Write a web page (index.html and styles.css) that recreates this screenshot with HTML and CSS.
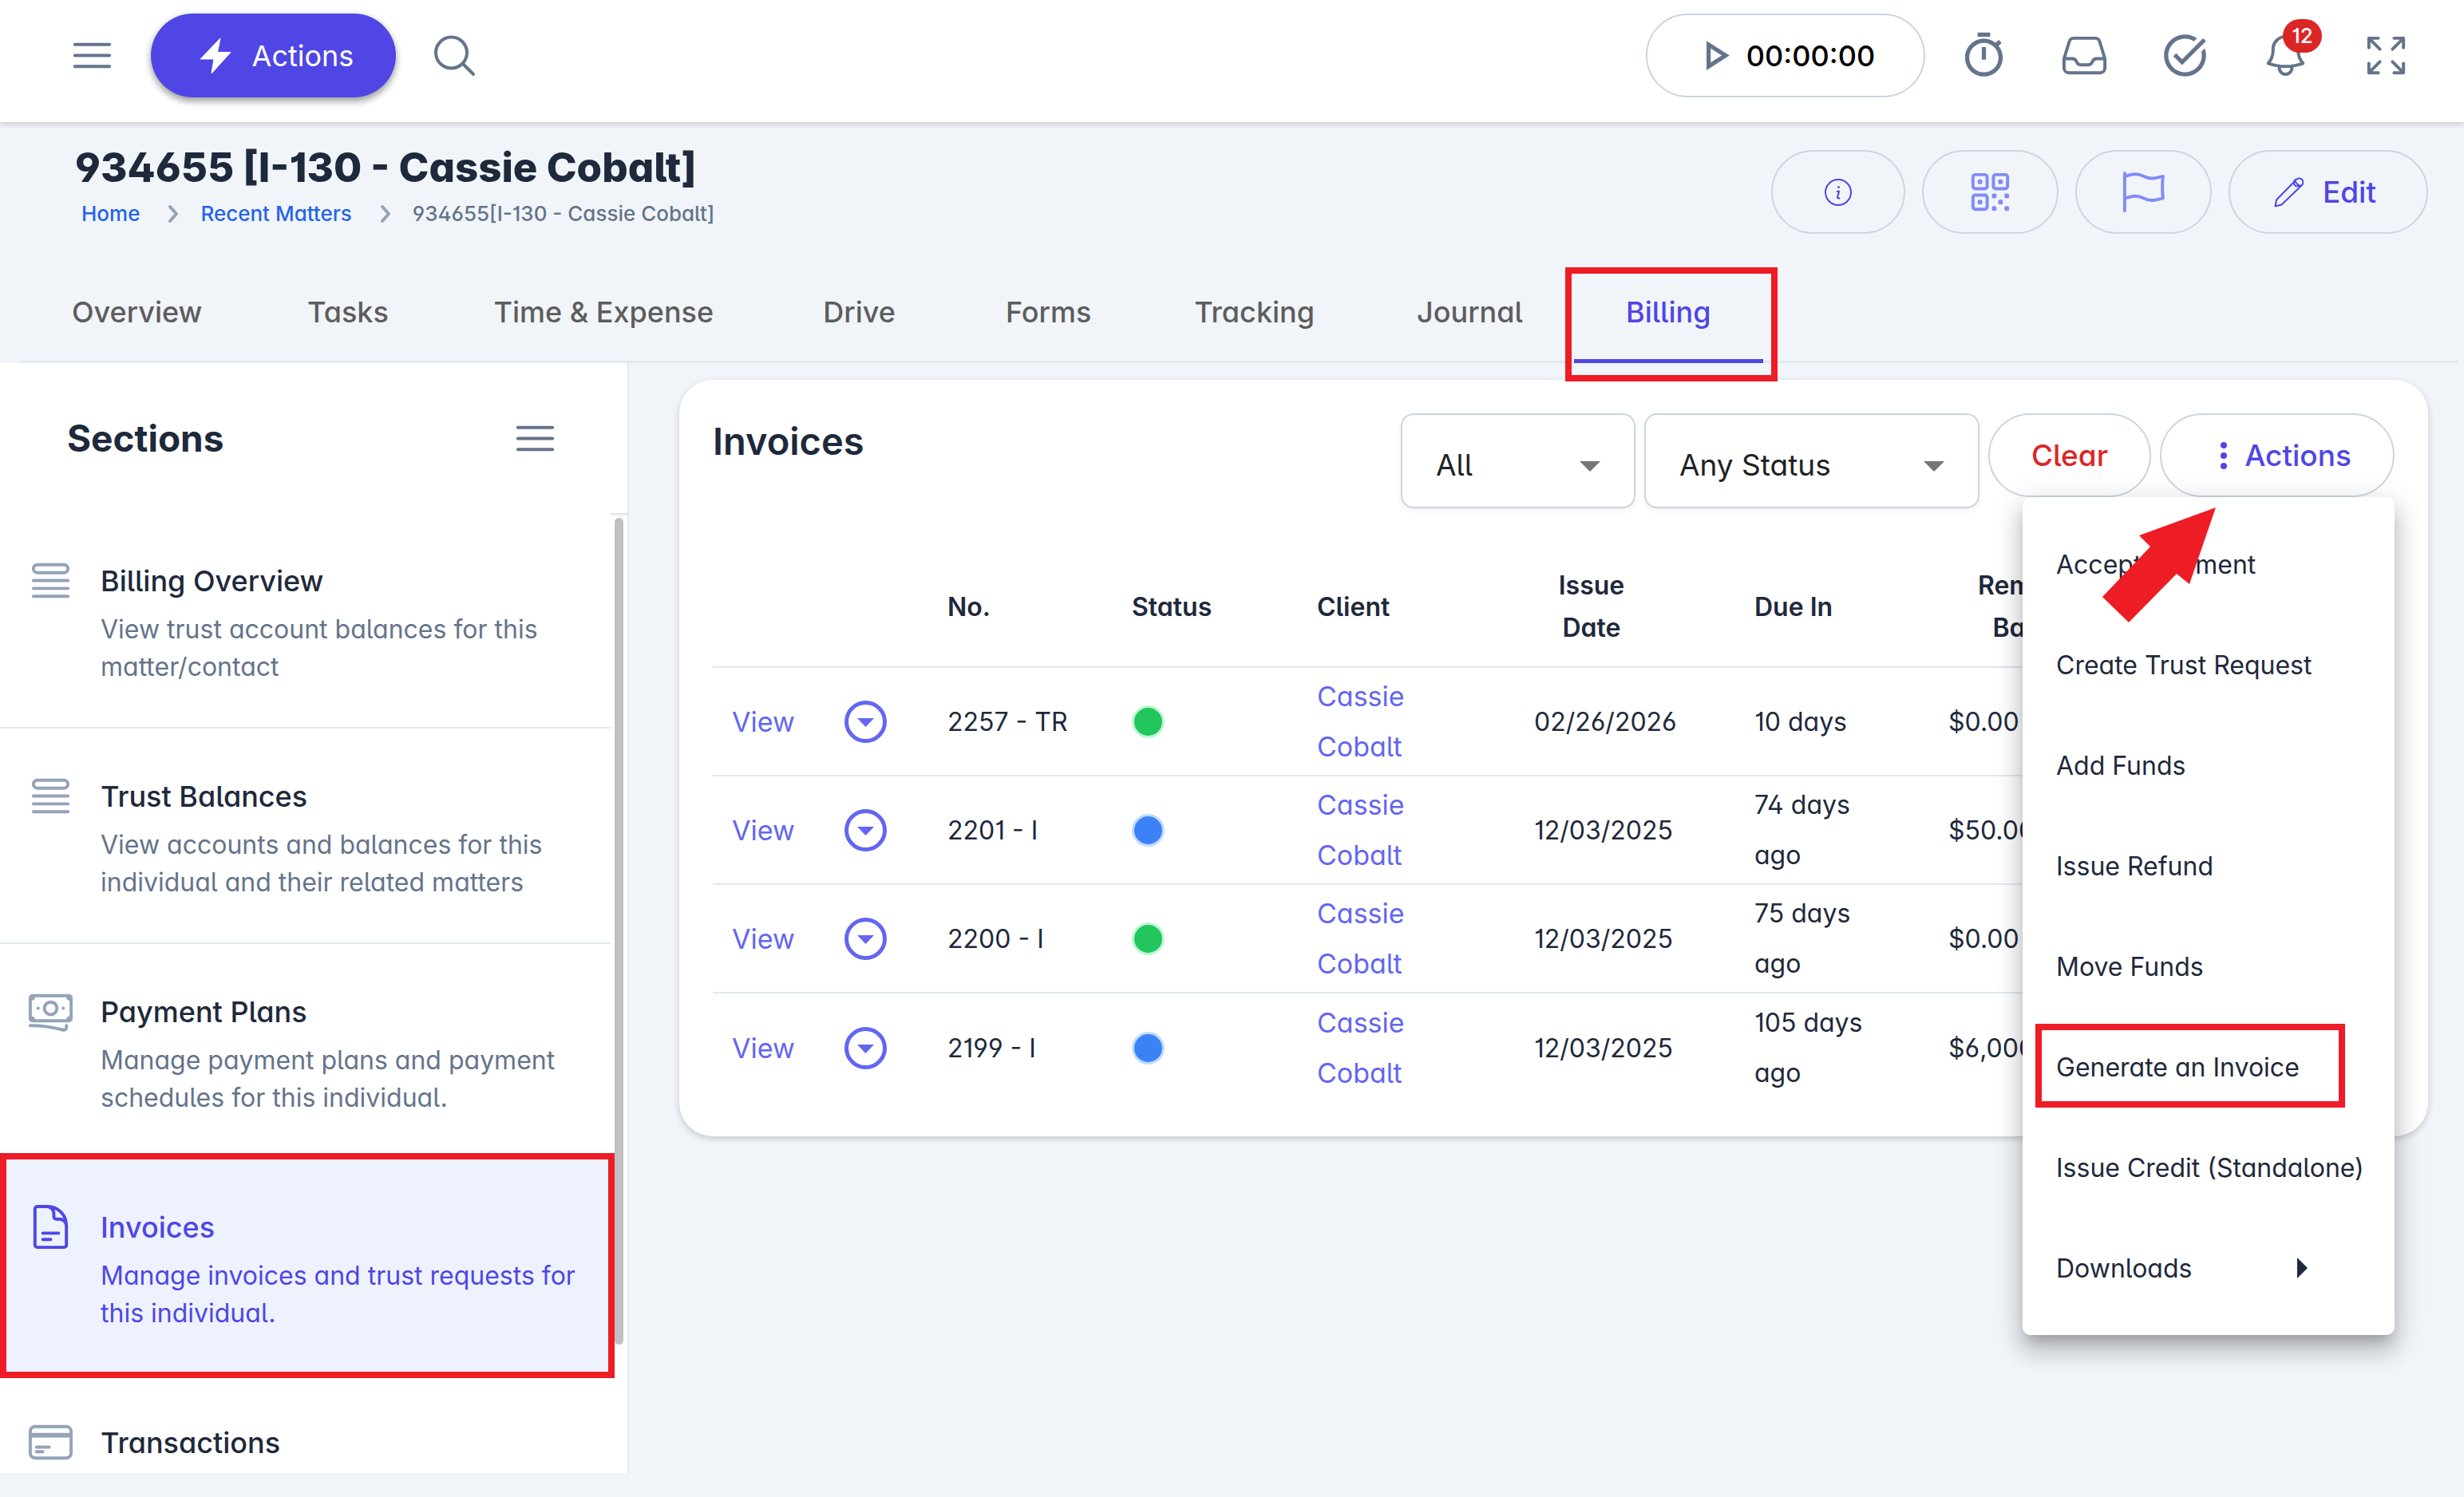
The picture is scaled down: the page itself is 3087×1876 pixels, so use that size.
FILE: index.html
```html
<!DOCTYPE html>
<html lang="en">
<head>
<meta charset="utf-8">
<title>934655 [I-130 - Cassie Cobalt]</title>
<link rel="stylesheet" href="styles.css">
</head>
<body>
<header class="topbar">
  <div class="topbar-group">
    <button class="icon-btn" type="button" aria-label="Menu">
      <svg class="icon line" viewBox="0 0 24 24"><path d="M3.75 6.75h16.5M3.75 12h16.5M3.75 17.25h16.5"/></svg>
    </button>
    <button class="btn primary" type="button">
      <svg class="bolt" viewBox="0 0 40 46"><path d="M26 1 22.5 18.500H39L15 45l3-18H1z"/></svg>
      Actions
    </button>
    <button class="icon-btn" type="button" aria-label="Search">
      <svg class="icon line search" viewBox="0 0 63 63"><circle cx="27.500" cy="28" r="19.500"/><path d="m42 42 13 13"/></svg>
    </button>
  </div>
  <div class="topbar-group">
    <button class="btn timer" type="button">
      <svg class="icon solid" viewBox="0 0 24 24"><path d="M10 8.640 15.270 12 10 15.360V8.640M8 5v14l11-7L8 5z"/></svg>
      00:00:00
    </button>
    <button class="icon-btn" type="button" aria-label="Timers">
      <svg class="icon solid" viewBox="0 0 24 24"><path d="M15 1H9v2h6V1zm-4 13h2V8h-2v6zm8.030-6.610l1.420-1.420c-.43-.51-.9-.99-1.410-1.410l-1.420 1.420A8.962 8.962 0 0 0 12 4c-4.970 0-9 4.030-9 9s4.020 9 9 9a8.994 8.994 0 0 0 7.030-14.610zM12 20c-3.870 0-7-3.130-7-7s3.130-7 7-7 7 3.130 7 7-3.130 7-7 7z"/></svg>
    </button>
    <button class="icon-btn" type="button" aria-label="Inbox">
      <svg class="icon line" viewBox="0 0 24 24"><path d="M2.25 13.5h3.86a2.25 2.25 0 012.012 1.244l.256.512a2.25 2.25 0 002.013 1.244h3.218a2.25 2.25 0 002.013-1.244l.256-.512a2.25 2.25 0 012.013-1.244h3.859m-19.5.338V18a2.25 2.25 0 002.25 2.25h15A2.25 2.25 0 0021.75 18v-4.162c0-.224-.034-.447-.1-.661L19.24 5.338a2.25 2.25 0 00-2.15-1.588H6.911a2.25 2.25 0 00-2.15 1.588L2.35 13.177a2.25 2.25 0 00-.1.661z"/></svg>
    </button>
    <button class="icon-btn" type="button" aria-label="Tasks">
      <svg class="icon solid" viewBox="0 0 24 24"><path d="M22 5.18L10.59 16.6l-4.24-4.24 1.41-1.41 2.83 2.83 10-10L22 5.18zm-2.21 5.04c.13.57.21 1.17.21 1.78 0 4.42-3.58 8-8 8s-8-3.58-8-8 3.58-8 8-8c1.58 0 3.04.46 4.28 1.25l1.44-1.44A9.9 9.9 0 0 0 12 2C6.48 2 2 6.48 2 12s4.48 10 10 10 10-4.48 10-10c0-1.19-.22-2.33-.6-3.39l-1.61 1.61z"/></svg>
    </button>
    <button class="icon-btn" type="button" aria-label="Notifications">
      <svg class="icon line" viewBox="0 0 24 24"><path d="M14.857 17.082a23.848 23.848 0 005.454-1.31A8.967 8.967 0 0118 9.75v-.7V9A6 6 0 006 9v.75a8.967 8.967 0 01-2.312 6.022c1.733.64 3.56 1.085 5.455 1.31m5.714 0a24.255 24.255 0 01-5.714 0m5.714 0a3 3 0 11-5.714 0"/></svg>
      <span class="badge">12</span>
    </button>
    <button class="icon-btn" type="button" aria-label="Full screen">
      <svg class="icon line" viewBox="0 0 24 24"><path d="M3.75 3.75v4.5m0-4.5h4.5m-4.5 0L9 9M3.75 20.25v-4.5m0 4.5h4.5m-4.5 0L9 15M20.25 3.75h-4.5m4.5 0v4.5m0-4.5L15 9m5.25 11.25h-4.5m4.5 0v-4.5m0 4.5L15 15"/></svg>
    </button>
  </div>
</header>

<div class="page-head">
  <div class="heading">
    <h1 class="title">934655 [I-130 - Cassie Cobalt]</h1>
    <nav class="crumbs" aria-label="Breadcrumb">
      <a href="#">Home</a>
      <svg class="chevron" viewBox="0 0 16 24"><path d="m4 3 8 9-8 9"/></svg>
      <a href="#">Recent Matters</a>
      <svg class="chevron" viewBox="0 0 16 24"><path d="m4 3 8 9-8 9"/></svg>
      <span>934655[I-130 - Cassie Cobalt]</span>
    </nav>
  </div>
  <div class="head-actions">
    <button class="btn outline" type="button" aria-label="Info">
      <svg class="info" viewBox="0 0 34 34"><circle cx="17" cy="17" r="16"/><path d="M15 16.500q3-2 3 0l-2 6.500q0 2.500 3 1"/><circle class="dot" cx="17.500" cy="10.500" r="1.500"/></svg>
    </button>
    <button class="btn outline soft" type="button" aria-label="QR code">
      <svg class="icon line" viewBox="0 0 24 24"><path d="M3.75 4.875c0-.621.504-1.125 1.125-1.125h4.5c.621 0 1.125.504 1.125 1.125v4.5c0 .621-.504 1.125-1.125 1.125h-4.5A1.125 1.125 0 013.75 9.375v-4.5zM3.75 14.625c0-.621.504-1.125 1.125-1.125h4.5c.621 0 1.125.504 1.125 1.125v4.5c0 .621-.504 1.125-1.125 1.125h-4.5a1.125 1.125 0 01-1.125-1.125v-4.5zM13.5 4.875c0-.621.504-1.125 1.125-1.125h4.5c.621 0 1.125.504 1.125 1.125v4.5c0 .621-.504 1.125-1.125 1.125h-4.5A1.125 1.125 0 0113.5 9.375v-4.5z"/><path d="M6.75 6.75h.75v.75h-.75v-.75zM6.75 16.5h.75v.75h-.75v-.75zM16.5 6.75h.75v.75h-.75v-.75zM13.5 13.5h.75v.75h-.75v-.75zM13.5 19.5h.75v.75h-.75v-.75zM19.5 13.5h.75v.75h-.75v-.75zM19.5 19.5h.75v.75h-.75v-.75zM16.5 16.5h.75v.75h-.75v-.75z"/></svg>
    </button>
    <button class="btn outline soft" type="button" aria-label="Flag">
      <svg class="icon line" viewBox="0 0 24 24"><path d="M3 3v1.500M3 21v-6m0 0l2.770-.693a9 9 0 016.208.682l.108.054a9 9 0 006.086.71l3.114-.732a48.524 48.524 0 01-.005-10.499l-3.110.732a9 9 0 01-6.085-.711l-.108-.054a9 9 0 00-6.208-.682L3 4.500M3 15V4.500"/></svg>
    </button>
    <button class="btn outline edit" type="button">
      <svg class="pencil" viewBox="0 0 37 39"><path d="M1.500 37.500 3 29.500 28 4a4.800 4.800 0 0 1 7 7L9.500 35.500zM26 6.500l6.500 6.500M29 3.500a4.500 4.500 0 1 0 4 7"/></svg>
      Edit
    </button>
  </div>
</div>

<nav class="tabs" aria-label="Matter">
  <a class="tab" href="#">Overview</a>
  <a class="tab" href="#">Tasks</a>
  <a class="tab" href="#">Time &amp; Expense</a>
  <a class="tab" href="#">Drive</a>
  <a class="tab" href="#">Forms</a>
  <a class="tab" href="#">Tracking</a>
  <a class="tab" href="#">Journal</a>
  <a class="tab active" href="#">Billing<span class="mark mark-tab"></span></a>
</nav>

<div class="body">
  <aside class="sidebar">
    <div class="side-head">
      <h2 class="side-title">Sections</h2>
      <button class="side-menu" type="button" aria-label="Toggle sections">
        <svg class="icon line" viewBox="0 0 24 24"><path d="M3.75 6.75h16.5M3.75 12h16.5M3.75 17.25h16.5"/></svg>
      </button>
    </div>
    <div class="side-scroll">
      <nav class="side-list" aria-label="Sections">
        <a class="section" href="#">
          <svg class="icon line" viewBox="0 0 24 24"><path d="M3.75 12h16.5m-16.5 3.750h16.5M3.750 19.500h16.5M5.625 4.500h12.750a1.875 1.875 0 010 3.750H5.625a1.875 1.875 0 010-3.750z"/></svg>
          <span class="section-text"><span class="section-name">Billing Overview</span><span class="section-desc">View trust account balances for this matter/contact</span></span>
        </a>
        <a class="section" href="#">
          <svg class="icon line" viewBox="0 0 24 24"><path d="M3.75 12h16.5m-16.5 3.750h16.5M3.750 19.500h16.5M5.625 4.500h12.750a1.875 1.875 0 010 3.750H5.625a1.875 1.875 0 010-3.750z"/></svg>
          <span class="section-text"><span class="section-name">Trust Balances</span><span class="section-desc">View accounts and balances for this individual and their related matters</span></span>
        </a>
        <a class="section" href="#">
          <svg class="icon line" viewBox="0 0 24 24"><path d="M2.25 18.75a60.07 60.07 0 0115.797 2.101c.727.198 1.453-.342 1.453-1.096V18.75M3.75 4.5v.75A.75.75 0 013 6h-.75m0 0v-.375c0-.621.504-1.125 1.125-1.125H20.25M2.25 6v9m18-10.5v.75c0 .414.336.75.75.75h.75m-1.5-1.5h.375c.621 0 1.125.504 1.125 1.125v9.75c0 .621-.504 1.125-1.125 1.125h-.375m1.5-1.5H21a.75.75 0 00-.75.75v.75m0 0H3.75m0 0h-.375a1.125 1.125 0 01-1.125-1.125V15m1.5 1.5v-.75A.75.75 0 003 15h-.75M15 10.5a3 3 0 11-6 0 3 3 0 016 0zm3 0h.008v.008H18V10.5zm-12 0h.008v.008H6V10.5z"/></svg>
          <span class="section-text"><span class="section-name">Payment Plans</span><span class="section-desc">Manage payment plans and payment schedules for this individual.</span></span>
        </a>
        <a class="section current" href="#">
          <svg class="icon line" viewBox="0 0 24 24"><path d="M19.5 14.25v-2.625a3.375 3.375 0 00-3.375-3.375h-1.5A1.125 1.125 0 0113.5 7.125v-1.5a3.375 3.375 0 00-3.375-3.375H8.25m0 12.75h7.5m-7.5 3H12M10.5 2.25H5.625c-.621 0-1.125.504-1.125 1.125v17.25c0 .621.504 1.125 1.125 1.125h12.75c.621 0 1.125-.504 1.125-1.125V11.25a9 9 0 00-9-9z"/></svg>
          <span class="section-text"><span class="section-name">Invoices</span><span class="section-desc">Manage invoices and trust requests for this individual.</span></span>
          <span class="mark mark-section"></span>
        </a>
        <a class="section" href="#">
          <svg class="icon line" viewBox="0 0 24 24"><path d="M2.25 8.25h19.5M2.25 9h19.5m-16.5 5.25h6m-6 2.25h3m-3.750 3h15a2.25 2.25 0 002.25-2.25V6.75A2.25 2.25 0 0019.5 4.5h-15a2.25 2.25 0 00-2.25 2.25v10.5A2.25 2.25 0 004.5 19.5z"/></svg>
          <span class="section-text"><span class="section-name">Transactions</span></span>
        </a>
      </nav>
      <div class="rail"><div class="thumb"></div></div>
    </div>
  </aside>

  <main class="content">
    <section class="card">
      <div class="card-head">
        <h2 class="card-title">Invoices</h2>
        <div class="filters">
          <div class="field field-type">
            <select class="select" aria-label="Type"><option>All</option></select>
            <svg class="arrow" viewBox="0 0 26 13"><path d="M0 0h26L13 13z"/></svg>
          </div>
          <div class="field field-status">
            <select class="select" aria-label="Status"><option>Any Status</option></select>
            <svg class="arrow" viewBox="0 0 26 13"><path d="M0 0h26L13 13z"/></svg>
          </div>
          <button class="btn outline clear" type="button">Clear</button>
          <div class="menu-anchor">
            <button class="btn outline more" type="button">
              <svg class="dots" viewBox="0 0 8 34"><circle cx="4" cy="4" r="4"/><circle cx="4" cy="17" r="4"/><circle cx="4" cy="30" r="4"/></svg>
              Actions
            </button>
            <div class="menu">
              <button class="menu-item" type="button">Accept Payment</button>
              <button class="menu-item" type="button">Create Trust Request</button>
              <button class="menu-item" type="button">Add Funds</button>
              <button class="menu-item" type="button">Issue Refund</button>
              <button class="menu-item" type="button">Move Funds</button>
              <button class="menu-item" type="button">Generate an Invoice<span class="mark mark-menu"></span></button>
              <button class="menu-item" type="button">Issue Credit (Standalone)</button>
              <button class="menu-item has-sub" type="button">Downloads <svg class="sub" viewBox="0 0 13 26"><path d="M0 0v26l13-13z"/></svg></button>
            </div>
            <svg class="pointer" viewBox="0 0 142 144"><path d="M142 0 46 35l14 14L0 112l33 32 60-61 16 13z"/></svg>
          </div>
        </div>
      </div>
      <table class="invoices">
        <colgroup><col class="c-view"><col class="c-open"><col class="c-no"><col class="c-status"><col class="c-client"><col class="c-date"><col class="c-due"><col></colgroup>
        <thead>
          <tr><th></th><th></th><th>No.</th><th>Status</th><th>Client</th><th class="date">Issue Date</th><th>Due In</th><th class="balance">Remaining Balance</th></tr>
        </thead>
        <tbody>
          <tr><td><a class="link" href="#">View</a></td><td><button class="expand" type="button" aria-label="Expand"><svg class="caret" viewBox="0 0 21 11"><path d="M0 0h21L10.500 11z"/></svg></button></td><td>2257 - TR</td><td><span class="status green"></span></td><td class="client"><a class="link" href="#">Cassie Cobalt</a></td><td>02/26/2026</td><td class="due">10 days</td><td>$0.00</td></tr>
          <tr><td><a class="link" href="#">View</a></td><td><button class="expand" type="button" aria-label="Expand"><svg class="caret" viewBox="0 0 21 11"><path d="M0 0h21L10.500 11z"/></svg></button></td><td>2201 - I</td><td><span class="status blue"></span></td><td class="client"><a class="link" href="#">Cassie Cobalt</a></td><td>12/03/2025</td><td class="due">74 days ago</td><td>$50.00</td></tr>
          <tr><td><a class="link" href="#">View</a></td><td><button class="expand" type="button" aria-label="Expand"><svg class="caret" viewBox="0 0 21 11"><path d="M0 0h21L10.500 11z"/></svg></button></td><td>2200 - I</td><td><span class="status green"></span></td><td class="client"><a class="link" href="#">Cassie Cobalt</a></td><td>12/03/2025</td><td class="due">75 days ago</td><td>$0.00</td></tr>
          <tr><td><a class="link" href="#">View</a></td><td><button class="expand" type="button" aria-label="Expand"><svg class="caret" viewBox="0 0 21 11"><path d="M0 0h21L10.500 11z"/></svg></button></td><td>2199 - I</td><td><span class="status blue"></span></td><td class="client"><a class="link" href="#">Cassie Cobalt</a></td><td>12/03/2025</td><td class="due">105 days ago</td><td>$6,000.00</td></tr>
        </tbody>
      </table>
    </section>
  </main>
</div>
</body>
</html>
```
FILE: styles.css
```css
* { box-sizing: border-box; }

body {
  margin: 0;
  height: 100vh;
  display: flex;
  flex-direction: column;
  overflow: hidden;
  background: #f1f5f9;
  color: #1e293b;
  font-family: Inter, "Liberation Sans", sans-serif;
  font-feature-settings: "cv01", "cv02", "cv03", "cv04", "cv05", "cv11";
  font-size: 32px;
}

h1, h2 { margin: 0; }
a { color: inherit; text-decoration: none; }
svg { display: block; flex: none; }

button, select {
  margin: 0;
  padding: 0;
  border: 0;
  background: none;
  color: inherit;
  font: inherit;
  font-feature-settings: inherit;
}

.icon { width: 63px; height: 63px; }
.line { fill: none; stroke: currentColor; stroke-width: 1.5; stroke-linecap: round; stroke-linejoin: round; }
.solid { fill: currentColor; }
.search { stroke-width: 4; }

.btn {
  display: flex;
  align-items: center;
  justify-content: center;
  height: 105px;
  border-radius: 53px;
  font-size: 37px;
  font-weight: 500;
  white-space: nowrap;
}

/* Top bar */
.topbar {
  position: relative;
  flex: none;
  display: flex;
  justify-content: space-between;
  padding: 17px 45px 31px 63px;
  background: #fff;
  box-shadow: 0 2px 8px rgba(0, 0, 0, .2);
  color: #64748b;
}
.topbar-group { display: flex; gap: 21px; }
.icon-btn {
  position: relative;
  display: flex;
  align-items: center;
  justify-content: center;
  width: 105px;
  height: 105px;
}
.primary {
  gap: 26px;
  width: 307px;
  padding-left: 8px;
  background: #4f46e5;
  color: #fff;
  font-size: 36px;
  font-weight: 400;
  box-shadow: 0 6px 8px rgba(0, 0, 0, .25), 0 2px 10px rgba(0, 0, 0, .2);
}
.bolt { width: 40px; height: 46px; fill: currentColor; stroke: currentColor; stroke-width: 1; stroke-linejoin: round; }
.timer {
  gap: 8px;
  width: 350px;
  padding-right: 8px;
  border: 2px solid #cbd5e1;
  color: #000;
  font-size: 36px;
}
.timer .icon { color: #64748b; }
.badge {
  position: absolute;
  top: 7px;
  left: 49px;
  width: 49px;
  height: 42px;
  border-radius: 21px;
  background: #dc2626;
  color: #fff;
  font-size: 26px;
  font-weight: 500;
  line-height: 42px;
  text-align: center;
}

/* Matter heading */
.page-head {
  flex: none;
  display: flex;
  align-items: flex-start;
  justify-content: space-between;
  padding: 29px 45px 36px 94px;
}
.title { font-size: 51px; font-weight: 800; line-height: 56px; }
.crumbs {
  display: flex;
  align-items: center;
  gap: 26px;
  margin-top: 13px;
  padding-left: 8px;
  font-size: 26px;
  font-weight: 500;
  line-height: 34px;
  color: #64748b;
}
.crumbs a { color: #2563eb; }
.chevron { width: 16px; height: 24px; margin-left: 8px; fill: none; stroke: #94a3b8; stroke-width: 4; stroke-linecap: round; stroke-linejoin: round; }
.head-actions { display: flex; gap: 21px; margin-top: 6px; }
.outline { border: 2px solid #cbd5e1; color: #4f46e5; padding: 0 52px; }
.soft svg { color: #818cf8; }
.info { width: 34px; height: 34px; margin: 0 13px; fill: none; stroke: currentColor; stroke-width: 2; }
.info .dot { fill: currentColor; stroke: none; }
.edit { width: 250px; gap: 24px; padding: 0 60px 0 52px; }
.pencil { width: 37px; height: 39px; fill: none; stroke: currentColor; stroke-width: 2; stroke-linejoin: round; }

/* Tabs */
.tabs {
  flex: none;
  display: flex;
  height: 126px;
  margin: 0 8px 0 26px;
  box-shadow: inset 0 -3px #e2e8f0;
  color: #5d5d5d;
  font-size: 36px;
  font-weight: 500;
}
.tab {
  position: relative;
  display: flex;
  align-items: center;
  justify-content: center;
  min-width: 237px;
  padding: 0 64px 2px;
  white-space: nowrap;
}
.tab.active { color: #4f46e5; box-shadow: inset 0 -5px #4f46e5; }

/* Red call-out frames */
.mark { position: absolute; border: 8px solid #ee1c25; pointer-events: none; }
.mark-tab { inset: 6px -18px -23px -11px; z-index: 2; }
.mark-section { inset: -8px -5px -6px 0; z-index: 2; }
.mark-menu { inset: 9px 62px 12px 16px; }

/* Body */
.body { flex: 1; display: flex; min-height: 0; }
.sidebar {
  flex: none;
  display: flex;
  flex-direction: column;
  width: 788px;
  margin-bottom: 30px;
  border-right: 2px solid #e2e8f0;
  background: #fff;
}
.side-head {
  display: flex;
  align-items: center;
  justify-content: space-between;
  padding: 63px 84px 62px 84px;
}
.side-title { font-size: 46px; font-weight: 700; line-height: 63px; }
.side-menu { color: #64748b; }
.side-scroll { flex: 1; display: flex; min-height: 0; overflow: hidden; }
.side-list { flex: 1; min-width: 0; }
.section {
  position: relative;
  display: flex;
  gap: 31px;
  padding: 53px 20px 52px 32px;
  border-bottom: 2px solid #e2e8f0;
}
.section .icon { color: #94a3b8; }
.section-text { padding-top: 7px; }
.section-name { display: block; font-size: 36px; font-weight: 500; line-height: 50px; }
.section-desc { display: block; margin-top: 12px; line-height: 47px; color: #64748b; }
.current { background: #eef2ff; }
.current, .current .icon, .current .section-desc { color: #4f46e5; }
.rail { flex: none; width: 21px; padding: 6px 5px; box-shadow: inset 0 5px 5px -4px rgba(0, 0, 0, .2); }
.thumb { height: 87%; border-radius: 6px; background: #c1c1c1; }

/* Invoice card */
.content { flex: 1; min-width: 0; padding: 21px 45px 0 63px; }
.card {
  padding: 42px 42px 43px;
  border-radius: 42px;
  background: #fff;
  box-shadow: 0 3px 8px rgba(0, 0, 0, .18);
}
.card-head { display: flex; justify-content: space-between; align-items: flex-start; }
.card-title { padding-top: 3px; font-size: 47px; font-weight: 600; line-height: 63px; }
.filters { display: flex; align-items: flex-start; gap: 11px; }
.field { position: relative; }
.field-type { width: 294px; }
.field-status { width: 420px; }
.select {
  appearance: none;
  width: 100%;
  height: 119px;
  padding: 10px 80px 0 42px;
  border: 2px solid #cbd5e1;
  border-radius: 16px;
  background: #fff;
  box-shadow: 0 3px 6px rgba(0, 0, 0, .06);
  color: #212121;
  font-size: 37px;
}
.arrow { position: absolute; top: 60px; right: 44px; width: 26px; height: 13px; fill: #757575; pointer-events: none; }
.clear { width: 204px; color: #dc2626; }
.menu-anchor { position: relative; }
.more { gap: 22px; width: 294px; padding-left: 74px; }
.dots { width: 8px; height: 34px; fill: currentColor; }

.menu {
  position: absolute;
  z-index: 3;
  top: 105px;
  right: 0;
  width: 466px;
  padding: 21px 0;
  border-radius: 10px;
  background: #fff;
  box-shadow: 0 13px 16px -8px rgba(0, 0, 0, .2), 0 21px 27px 3px rgba(0, 0, 0, .14), 0 8px 37px 5px rgba(0, 0, 0, .12);
}
.menu-item {
  position: relative;
  display: flex;
  align-items: center;
  width: 100%;
  height: 126px;
  padding: 0 0 0 42px;
  white-space: nowrap;
}
.has-sub { justify-content: space-between; padding-right: 109px; }
.sub { width: 13px; height: 26px; fill: currentColor; }
.pointer { position: absolute; z-index: 4; top: 118px; left: -72px; width: 142px; height: 144px; fill: #ee1c25; }

.invoices {
  width: 100%;
  margin-top: 38px;
  table-layout: fixed;
  border-collapse: separate;
  border-spacing: 0;
}
.c-view { width: 141px; }
.c-open { width: 129px; }
.c-no { width: 231px; }
.c-status { width: 232px; }
.c-client { width: 272px; }
.c-date { width: 276px; }
.c-due { width: 243px; }
th, td { border-bottom: 2px solid #e2e8f0; text-align: left; vertical-align: middle; }
th { height: 162px; padding: 10px 24px 0; font-weight: 600; line-height: 53px; }
td { height: 136px; padding: 4px 24px; line-height: 63px; }
tbody tr:last-child td { border-bottom: 0; }
.date { padding-right: 108px; text-align: center; }
.balance { padding-right: 321px; text-align: center; }
.client { padding-right: 90px; }
.due { padding-right: 70px; }
.link { display: block; color: #6366f1; font-size: 34px; }
.expand {
  display: flex;
  align-items: center;
  justify-content: center;
  width: 53px;
  height: 53px;
  padding-top: 3px;
  border: 5px solid #6366f1;
  border-radius: 50%;
}
.caret { width: 21px; height: 11px; fill: #6366f1; }
.status { display: block; width: 41px; height: 41px; border: 3px solid; border-radius: 50%; }
.green { background: #22c55e; border-color: #bbf7d0; }
.blue { background: #3b82f6; border-color: #bfdbfe; }
```
